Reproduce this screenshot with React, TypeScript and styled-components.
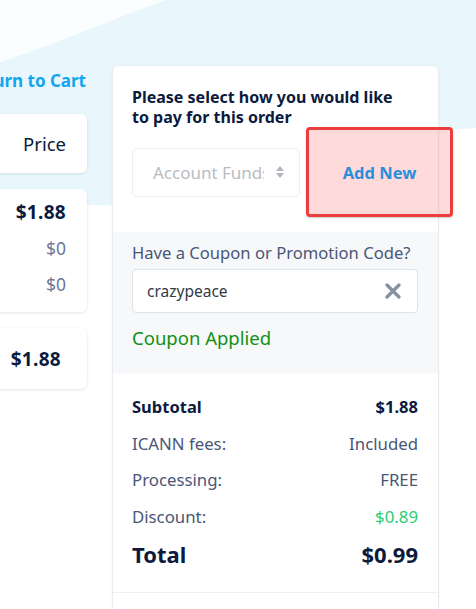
import React from 'react';
import styled, { createGlobalStyle } from 'styled-components';

const GlobalStyle = createGlobalStyle`
  html, body {
    margin: 0;
    padding: 0;
    background: #ffffff;
  }
  body {
    font-family: 'Noto Sans', 'Liberation Sans', sans-serif;
    color: #0b1a3d;
  }
`;

const Page = styled.div`
  position: relative;
  width: 476px;
  height: 609px;
  overflow: hidden;
  background: #ffffff;
`;

const Backdrop = styled.svg`
  position: absolute;
  left: 0;
  top: 0;
  width: 476px;
  height: 260px;
  z-index: 0;
`;

const Layout = styled.div`
  position: relative;
  z-index: 1;
  display: flex;
  align-items: flex-start;
  padding-top: 65px;
  margin-left: -60px;
`;

const LeftColumn = styled.div`
  width: 147px;
  display: flex;
  flex-direction: column;
  gap: 16px;
`;

const BackLink = styled.a`
  display: block;
  height: 30px;
  margin-top: 5px;
  margin-bottom: -2px;
  text-align: right;
  font-size: 17px;
  font-weight: 700;
  color: #14a5ee;
  line-height: 22px;
  padding-right: 1px;
  white-space: nowrap;
`;

const Card = styled.div<{ $h: number; $pr?: number }>`
  height: ${(p) => p.$h}px;
  box-sizing: border-box;
  background: #fff;
  border-radius: 6px;
  box-shadow: 0 1px 3px rgba(20, 40, 80, 0.12);
  display: flex;
  flex-direction: column;
  justify-content: center;
  align-items: flex-end;
  padding-right: ${(p) => p.$pr ?? 21}px;
`;

const CardList = styled(Card)`
  justify-content: flex-start;
  padding-top: 12px;
  gap: 14px;
`;

const CardValue = styled.div<{ $muted?: boolean; $bold?: boolean; $size?: number }>`
  font-size: ${(p) => p.$size ?? 18.5}px;
  font-weight: ${(p) => (p.$bold ? 700 : 400)};
  color: ${(p) => (p.$muted ? '#6b7896' : '#0b1a3d')};
  line-height: 22px;
  letter-spacing: ${(p) => (p.$bold ? 0.3 : 0)}px;
`;

const Panel = styled.div`
  margin-left: 25px;
  width: 327px;
  height: 560px;
  box-sizing: border-box;
  background: #fff;
  border: 1px solid #e8ecf0;
  border-radius: 6px;
  box-shadow: 0 1px 3px rgba(20, 40, 80, 0.05);
`;

const PaySection = styled.div`
  padding: 21px 20px 0 19px;
  height: 166px;
  box-sizing: border-box;
`;

const Heading = styled.h3`
  margin: 0;
  max-width: 275px;
  font-size: 16px;
  font-weight: 700;
  line-height: 20px;
  color: #0b1a3d;
`;

const PayRow = styled.div`
  display: flex;
  align-items: center;
  gap: 6px;
`;

const SelectBox = styled.div`
  width: 168px;
  height: 49px;
  box-sizing: border-box;
  border: 1px solid #eceef1;
  border-radius: 5px;
  display: flex;
  align-items: center;
  padding: 0 14px 0 20px;
  gap: 11px;
  color: #b9bcc2;
  font-size: 17px;
`;

const SelectText = styled.span`
  width: 111px;
  overflow: hidden;
  white-space: nowrap;
`;

const AddNew = styled.button`
  position: relative;
  width: 148px;
  height: 90px;
  border: none;
  background: transparent;
  font-family: inherit;
  font-size: 16.5px;
  font-weight: 700;
  color: #2a8fdb;
  cursor: pointer;
  padding: 0;
  margin-right: -35px;
`;

const AddLabel = styled.span`
  position: relative;
  z-index: 1;
`;

const Highlight = styled.span`
  position: absolute;
  inset: 0;
  border: 3px solid #ea3d3d;
  border-radius: 4px;
  background: rgba(255, 70, 70, 0.2);
  box-shadow: 0 1px 2px rgba(0, 0, 0, 0.2);
  pointer-events: none;
`;

const CouponSection = styled.div`
  background: #f6f8fa;
  height: 141px;
  box-sizing: border-box;
  padding: 10px 20px 0 19px;
`;

const CouponLabel = styled.div`
  font-size: 16.6px;
  color: #4a5677;
  line-height: 22px;
  white-space: nowrap;
`;

const CouponInput = styled.div`
  margin-top: 5px;
  height: 44px;
  box-sizing: border-box;
  background: #fff;
  border: 1px solid #dfe2e7;
  border-radius: 4px;
  display: flex;
  align-items: center;
  padding: 0 16px 0 14px;
  font-size: 15.5px;
  color: #333a46;
`;

const CouponText = styled.span`
  flex: 1;
`;

const Applied = styled.div`
  margin-top: 13px;
  font-size: 18.5px;
  color: #129112;
  line-height: 24px;
`;

const Summary = styled.div`
  padding: 22px 20px 0 19px;
  height: 220px;
  box-sizing: border-box;
  border-bottom: 1px solid #eef0f3;
  display: flex;
  flex-direction: column;
  gap: 13.5px;
`;

const SumRow = styled.div<{ $bold?: boolean; $big?: boolean }>`
  display: flex;
  justify-content: space-between;
  align-items: center;
  font-size: ${(p) => (p.$big ? 22 : p.$bold ? 16.5 : 16.8)}px;
  font-weight: ${(p) => (p.$bold ? 700 : 400)};
  color: ${(p) => (p.$bold ? '#0b1a3d' : '#4a5677')};
  line-height: 23px;
  margin-top: ${(p) => (p.$big ? 2 : 0)}px;
`;

const Discount = styled.span`
  color: #2ecc71;
`;

const SortIcon = () => (
  <svg width="10" height="14" viewBox="0 0 10 14">
    <path d="M5 1 L9 6 H1 Z" fill="#b3b6bc" />
    <path d="M5 13 L9 8 H1 Z" fill="#b3b6bc" />
  </svg>
);

const ClearIcon = () => (
  <svg width="16" height="16" viewBox="0 0 16 16">
    <path d="M2 2 L14 14 M14 2 L2 14" stroke="#8590a3" strokeWidth="3.2" strokeLinecap="round" />
  </svg>
);

const App: React.FC = () => {
  return (
    <>
      <GlobalStyle />
      <Page>
        <Backdrop viewBox="0 0 476 260" preserveAspectRatio="none">
          <path
            d="M0 62 C 60 42, 110 20, 165 0 L476 0 L476 128 C 430 132, 380 125, 300 150 C 230 175, 170 210, 90 205 C 50 203, 20 195, 0 190 Z"
            fill="#e9f7fd"
          />
          <path d="M0 0 L165 0 C 110 20, 60 42, 0 62 Z" fill="#fbfeff" />
        </Backdrop>
        <Layout>
          <LeftColumn>
            <BackLink>Return to Cart</BackLink>
            <Card $h={59}>
              <CardValue>Price</CardValue>
            </Card>
            <CardList $h={123}>
              <CardValue $bold $size={19}>$1.88</CardValue>
              <CardValue $muted $size={17.5}>$0</CardValue>
              <CardValue $muted $size={17.5}>$0</CardValue>
            </CardList>
            <Card $h={61} $pr={26}>
              <CardValue $bold $size={19}>$1.88</CardValue>
            </Card>
          </LeftColumn>
          <Panel>
            <PaySection>
              <Heading>Please select how you would like to pay for this order</Heading>
              <PayRow>
                <SelectBox>
                  <SelectText>Account Funds</SelectText>
                  <SortIcon />
                </SelectBox>
                <AddNew>
                  <Highlight />
                  <AddLabel>Add New</AddLabel>
                </AddNew>
              </PayRow>
            </PaySection>
            <CouponSection>
              <CouponLabel>Have a Coupon or Promotion Code?</CouponLabel>
              <CouponInput>
                <CouponText>crazypeace</CouponText>
                <ClearIcon />
              </CouponInput>
              <Applied>Coupon Applied</Applied>
            </CouponSection>
            <Summary>
              <SumRow $bold>
                <span>Subtotal</span>
                <span>$1.88</span>
              </SumRow>
              <SumRow>
                <span>ICANN fees:</span>
                <span>Included</span>
              </SumRow>
              <SumRow>
                <span>Processing:</span>
                <span>FREE</span>
              </SumRow>
              <SumRow>
                <span>Discount:</span>
                <Discount>$0.89</Discount>
              </SumRow>
              <SumRow $bold $big>
                <span>Total</span>
                <span>$0.99</span>
              </SumRow>
            </Summary>
          </Panel>
        </Layout>
      </Page>
    </>
  );
};

export default App;
